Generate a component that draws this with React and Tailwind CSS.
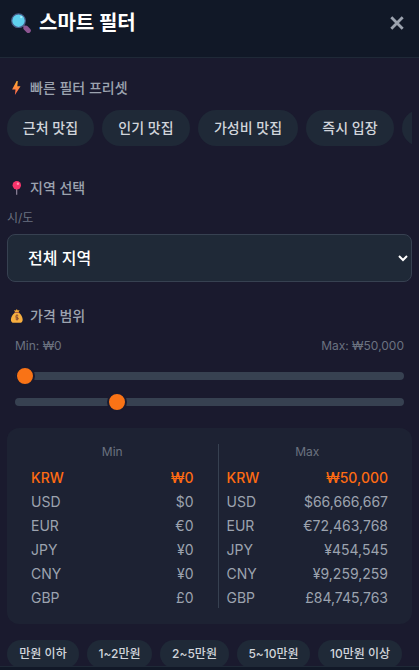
import React, { useState } from 'react';

const PRESETS = [
  { label: '근처 맛집', width: 'w-[87px]' },
  { label: '인기 맛집', width: 'w-[88px]' },
  { label: '가성비 맛집', width: 'w-[100px]' },
  { label: '즉시 입장', width: 'w-[88px]' },
  { label: '', width: 'w-[88px]' },
];

const PRICE_PRESETS = [
  { label: '만원 이하', width: 'w-[72px]' },
  { label: '1~2만원', width: 'w-[65px]' },
  { label: '2~5만원', width: 'w-[69px]' },
  { label: '5~10만원', width: 'w-[73px]' },
  { label: '10만원 이상', width: 'w-[84px]' },
];

const MIN_PRICES = [
  ['KRW', '₩0'],
  ['USD', '$0'],
  ['EUR', '€0'],
  ['JPY', '¥0'],
  ['CNY', '¥0'],
  ['GBP', '£0'],
];

const MAX_PRICES = [
  ['KRW', '₩50,000'],
  ['USD', '$66,666,667'],
  ['EUR', '€72,463,768'],
  ['JPY', '¥454,545'],
  ['CNY', '¥9,259,259'],
  ['GBP', '£84,745,763'],
];

function SearchIcon() {
  return (
    <svg className="w-5 h-5 shrink-0" viewBox="0 0 20 20">
      <path d="M12.2 12.4l2 2" stroke="#6d6a8c" strokeWidth="2" />
      <path d="M14.9 15.1l2.4 2.4" stroke="#8d5591" strokeWidth="5" strokeLinecap="round" />
      <circle cx="7.5" cy="7.7" r="6.8" fill="#5fd0ee" stroke="#4c5f8c" strokeWidth="1.2" />
      <circle cx="10.2" cy="4.2" r="1.1" fill="#a9ecfa" />
    </svg>
  );
}

function CloseIcon() {
  return (
    <svg className="w-[14px] h-[14px]" viewBox="0 0 14 14">
      <path d="M1.3 1.3l11.4 11.4M12.7 1.3L1.3 12.7" stroke="currentColor" strokeWidth="2.8" />
    </svg>
  );
}

function BoltIcon() {
  return (
    <svg className="w-3.5 h-3.5" viewBox="0 0 14 14">
      <defs>
        <linearGradient id="bolt" x1="0" y1="0" x2="0" y2="1">
          <stop offset="0" stopColor="#ffb02e" />
          <stop offset="1" stopColor="#ff6050" />
        </linearGradient>
      </defs>
      <path d="M6.6 0h1.2L7.3 5.2h3.2L4.9 14l.6-5.4H2.1z" fill="url(#bolt)" />
    </svg>
  );
}

function PinIcon() {
  return (
    <svg className="w-3.5 h-3.5" viewBox="0 0 14 14">
      <path d="M6.7 7v6.8" stroke="#998ea4" strokeWidth="1.1" />
      <circle cx="6.8" cy="4.2" r="4.2" fill="#f8346b" />
      <circle cx="7.9" cy="2.7" r="1.2" fill="#ff8fae" />
    </svg>
  );
}

function MoneyBagIcon() {
  return (
    <svg className="w-3.5 h-3.5" viewBox="0 0 14 14">
      <path d="M4.1.9l1.7.5L6.8 0l1 1.4 1.8-.5-1.2 2.5H5.2z" fill="#f0a634" />
      <path d="M4.9 3.7h4c2 1.4 3.8 4.5 3.8 7 0 2.1-1.1 3.1-2.8 3.1H3.8C2 13.8.9 12.8.9 10.7c0-2.5 1.9-5.6 4-7z" fill="#f7ae3f" />
      <path d="M4.6 3.5h4.6" stroke="#a85b43" strokeWidth="1" />
      <path d="M8.3 6.7c-.8-.8-2.7-.6-2.7.5 0 1.3 2.8.9 2.8 2.3 0 1.2-2 1.4-2.9.5M7 5.5v6M5.5 8.6l2.8 1.3" fill="none" stroke="#7d4533" strokeWidth=".8" />
    </svg>
  );
}

function SectionTitle({ icon, children }) {
  return (
    <h3 className="flex items-center h-5 pl-[3px] text-sm font-medium text-[#9ca3af]">
      {icon}
      <span className="ml-[6px]">{children}</span>
    </h3>
  );
}

function Slider({ position }) {
  return (
    <div className="relative h-2 rounded-full bg-[#374151]">
      <div
        className="absolute -top-1.5 w-5 h-5 rounded-full border-2 border-[#1a1a2e] bg-[#f97316]"
        style={{ left: position }}
      ></div>
    </div>
  );
}

function PriceColumn({ title, rows, className = '' }) {
  return (
    <div className={`px-2 ${className}`}>
      <div className="mb-2 text-xs text-center text-[#6b7280]">{title}</div>
      <div className="space-y-1">
        {rows.map(([code, value], i) => (
          <div
            key={code}
            className={`flex justify-between text-sm ${i === 0 ? 'font-medium text-[#ff6b12]' : 'text-[#9ca3af]'}`}
          >
            <span>{code}</span>
            <span>{value}</span>
          </div>
        ))}
      </div>
    </div>
  );
}

export default function App() {
  const [region, setRegion] = useState('all');

  return (
    <div className="flex flex-col w-full h-[670px] overflow-hidden bg-[#1a1a2e] font-['Inter','Noto_Sans_CJK_KR',sans-serif]">
      {/* Header */}
      <header className="flex items-start justify-between h-[58px] shrink-0 pl-[11px] pr-[15px] border-b border-[#1f2937] bg-[#111827]">
        <div className="flex items-center h-[45px]">
          <SearchIcon />
          <h2 className="ml-2 text-xl font-bold text-white">스마트 필터</h2>
        </div>
        <button className="flex items-center h-[45px] text-[#9ca3af]">
          <CloseIcon />
        </button>
      </header>

      {/* Filters */}
      <main className="flex-1 min-h-0 px-[7px] pt-5 overflow-hidden">
        <section className="mb-8">
          <SectionTitle icon={<BoltIcon />}>빠른 필터 프리셋</SectionTitle>
          <div className="flex gap-2 mt-3 overflow-hidden">
            {PRESETS.map((preset) => (
              <button
                key={preset.label}
                className={`h-9 shrink-0 rounded-full bg-[#1f2937] text-sm font-medium text-[#d1d5db] whitespace-nowrap ${preset.width}`}
              >
                {preset.label}
              </button>
            ))}
          </div>
        </section>

        <section className="mb-6">
          <SectionTitle icon={<PinIcon />}>지역 선택</SectionTitle>
          <label className="block mt-3 mb-2 text-xs leading-4 text-[#6b7280]">시/도</label>
          <select
            value={region}
            onChange={(e) => setRegion(e.target.value)}
            className="block w-full h-12 px-4 border border-[#374151] rounded-lg bg-[#1f2937] text-base font-medium text-white"
          >
            <option value="all">전체 지역</option>
          </select>
        </section>

        <section>
          <SectionTitle icon={<MoneyBagIcon />}>가격 범위</SectionTitle>
          <div className="px-2 mt-3">
            <div className="flex justify-between text-xs text-[#6b7280]">
              <span>Min: ₩0</span>
              <span>Max: ₩50,000</span>
            </div>
            <div className="mt-[18px] space-y-[18px]">
              <Slider position="0px" />
              <Slider position="92px" />
            </div>
          </div>

          <div className="grid grid-cols-2 gap-4 p-4 mt-[22px] rounded-xl bg-[#1f2937]/50">
            <PriceColumn title="Min" rows={MIN_PRICES} />
            <PriceColumn title="Max" rows={MAX_PRICES} className="border-l border-[#374151]" />
          </div>

          <div className="flex gap-2 mt-4">
            {PRICE_PRESETS.map((preset) => (
              <button
                key={preset.label}
                className={`h-7 shrink-0 rounded-full bg-[#1f2937] text-xs font-medium text-[#d1d5db] whitespace-nowrap ${preset.width}`}
              >
                {preset.label}
              </button>
            ))}
          </div>
        </section>
      </main>

      {/* Footer edge */}
      <footer className="h-1 shrink-0 border-t border-[#1f2937] bg-[#111827]"></footer>
    </div>
  );
}
